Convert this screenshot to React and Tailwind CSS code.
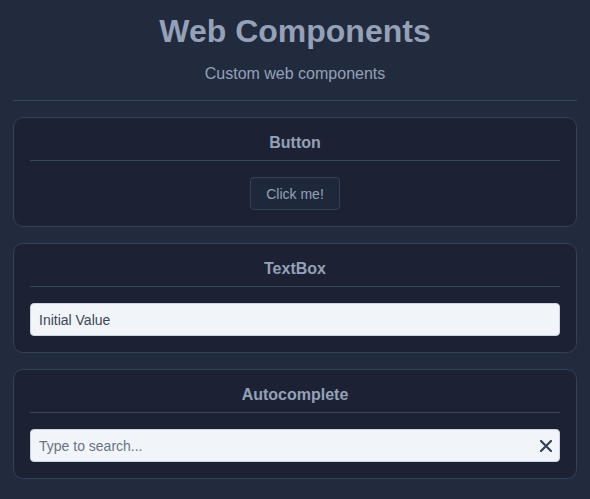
import { useState } from "react";

const Card = ({ title, children }) => (
  <div className="rounded-[10px] border border-[#334058] bg-[#1c2233] p-4">
    <h2 className="border-b border-[#3a465d] pb-2 text-center text-base leading-[18px] font-bold text-[#94a1b8]">
      {title}
    </h2>
    <div className="mt-4">{children}</div>
  </div>
);

const App = () => {
  const [text, setText] = useState("Initial Value");
  const [query, setQuery] = useState("");

  return (
    <div
      className="min-h-screen bg-[#222a3e] px-[13px] pt-[12px] pb-4"
      style={{ fontFamily: '"Liberation Sans", Arial, sans-serif' }}
    >
      <h1 className="text-center text-[32px] leading-[38px] font-bold text-[#94a1b8]">
        Web Components
      </h1>
      <p className="mt-[15px] text-center text-base leading-[18px] text-[#94a1b8]">
        Custom web components
      </p>
      <hr className="mt-[17px] border-t border-[#3a465d]" />

      <div className="mt-4 flex flex-col gap-4">
        <Card title="Button">
          <div className="flex justify-center">
            <button className="h-[33px] rounded border border-[#334058] bg-[#1f283b] px-[15px] text-sm text-[#94a1b8]">
              Click me!
            </button>
          </div>
        </Card>

        <Card title="TextBox">
          <input
            value={text}
            onChange={(e) => setText(e.target.value)}
            className="h-[33px] w-full rounded border border-[#cbd5e1] bg-[#f1f5f9] px-2 text-sm text-[#3b4558] outline-none"
          />
        </Card>

        <Card title="Autocomplete">
          <div className="relative">
            <input
              value={query}
              onChange={(e) => setQuery(e.target.value)}
              placeholder="Type to search..."
              className="h-[33px] w-full rounded border border-[#cbd5e1] bg-[#f1f5f9] px-2 pr-8 text-sm text-[#3b4558] placeholder-[#6b7280] outline-none"
            />
            <button
              onClick={() => setQuery("")}
              className="absolute top-1/2 right-2 -translate-y-1/2 text-[#334155]"
            >
              <svg width="12" height="12" viewBox="0 0 12 12">
                <path d="M1 1L11 11M11 1L1 11" stroke="currentColor" strokeWidth="2.2" strokeLinecap="round" />
              </svg>
            </button>
          </div>
        </Card>
      </div>
    </div>
  );
};

export default App;
